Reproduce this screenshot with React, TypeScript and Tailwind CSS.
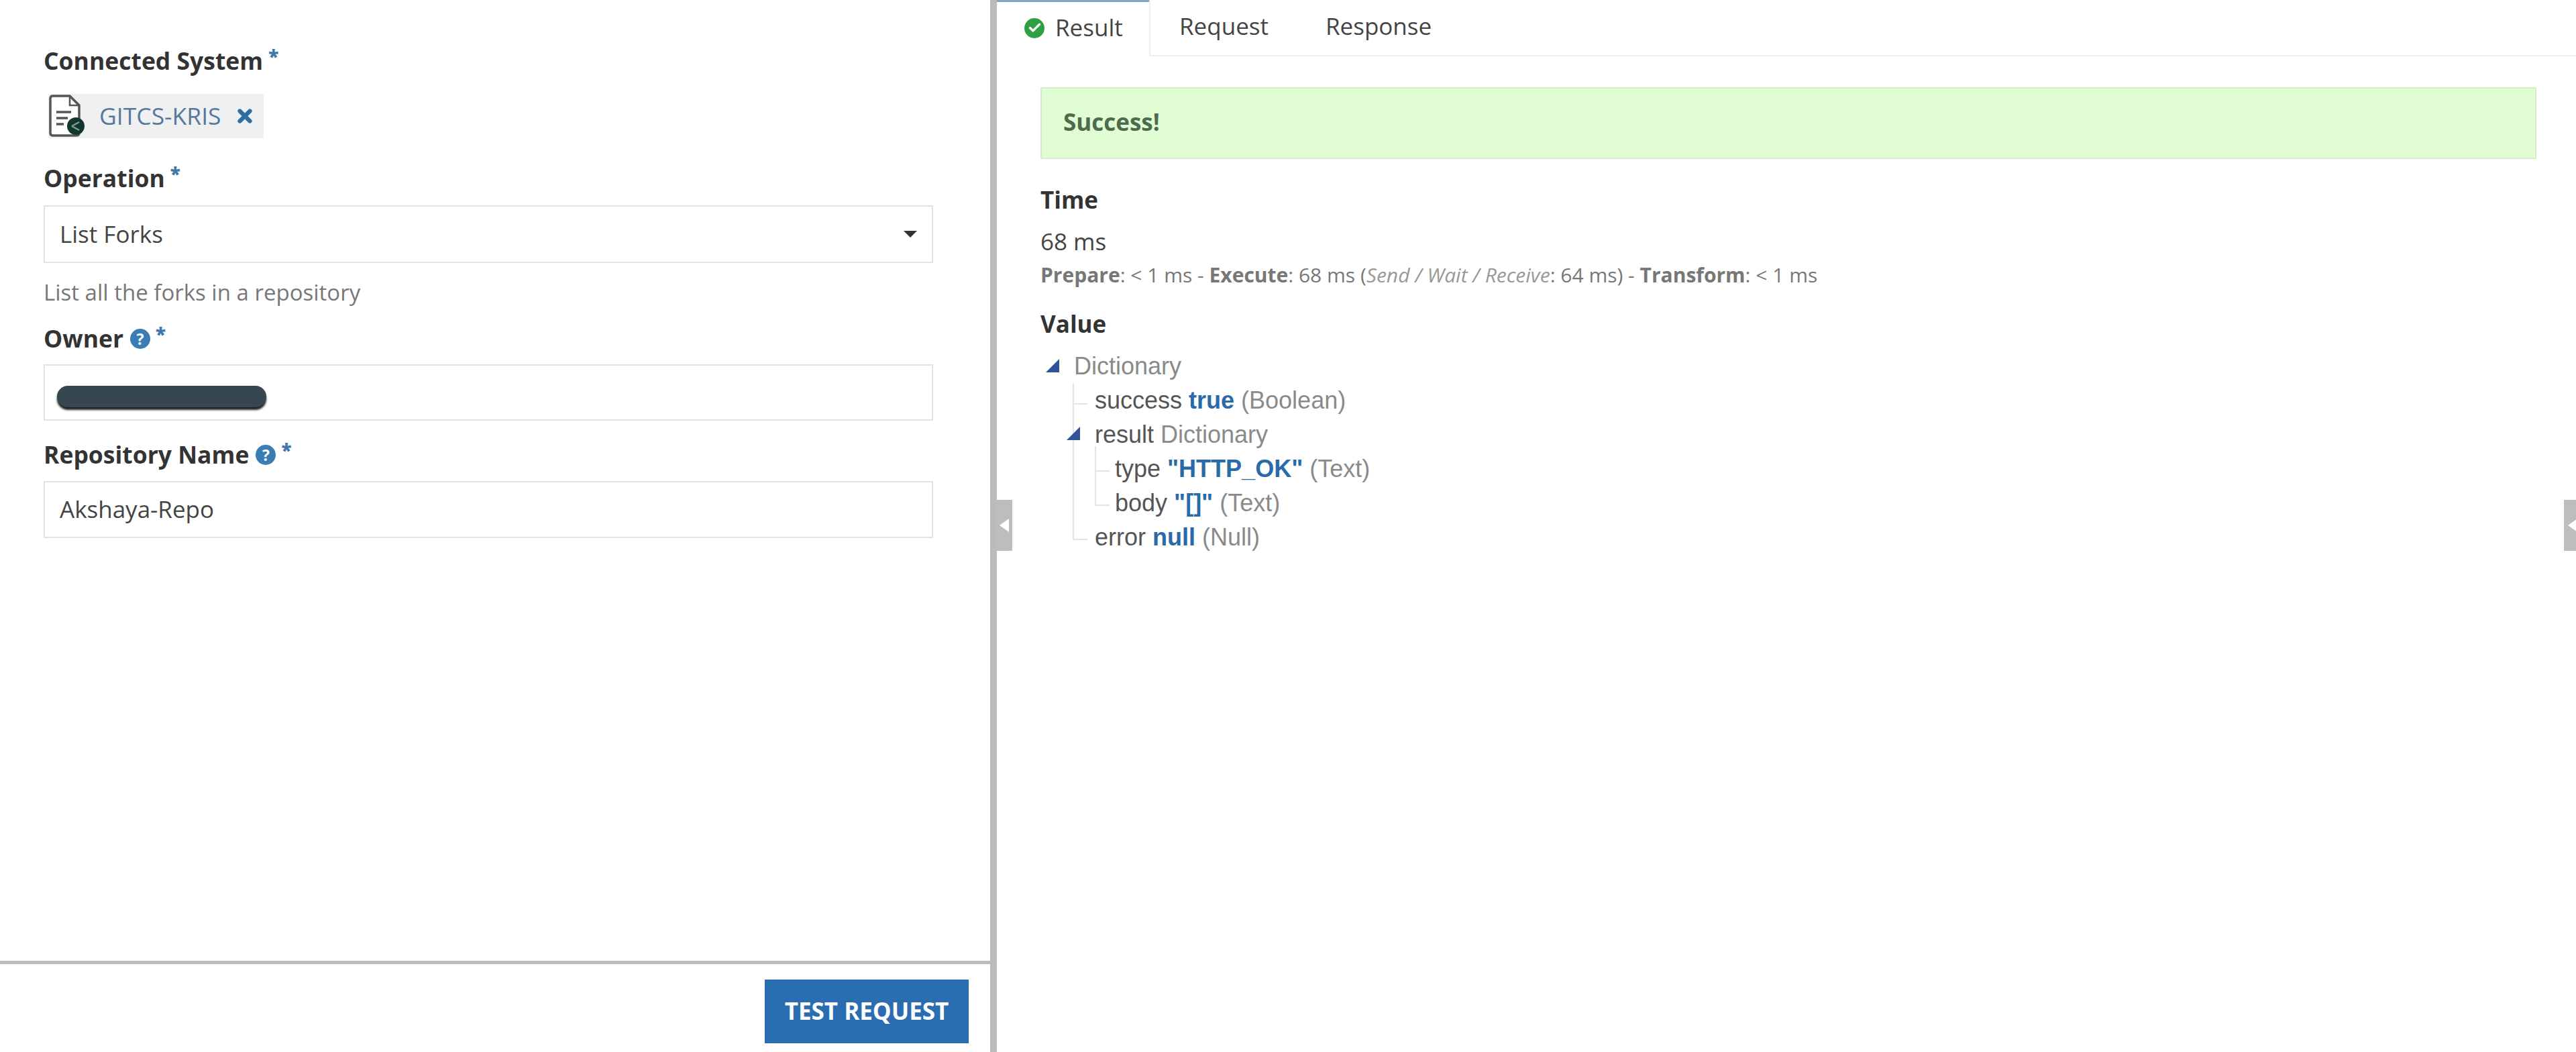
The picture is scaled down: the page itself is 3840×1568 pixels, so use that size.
import { Check, X } from "lucide-react";
import type { ReactNode } from "react";

const openSans = "font-['Open_Sans',sans-serif]";

function Required() {
  return <span className="ml-[8px] self-start text-[28px] leading-[36px] font-extrabold text-[#3f78a8]">*</span>;
}

function HelpIcon() {
  return (
    <span className="ml-[10px] flex size-[30px] items-center justify-center rounded-full bg-[#3a7db5] text-[23px] leading-none font-bold text-white">
      ?
    </span>
  );
}

function FieldLabel({ text, help, className }: { text: string; help?: boolean; className: string }) {
  return (
    <div className={`flex h-[50px] items-center text-[35.5px] font-bold text-[#333333] ${className}`}>
      {text}
      {help && <HelpIcon />}
      <Required />
    </div>
  );
}

function TextBox({ children, className }: { children: ReactNode; className: string }) {
  return (
    <div className={`flex items-center border-2 border-[#e2e2e2] bg-white pl-[22px] text-[35px] text-[#444444] ${className}`}>
      {children}
    </div>
  );
}

function SystemIcon() {
  return (
    <svg viewBox="0 0 56 66" className="h-[66px] w-[56px] shrink-0">
      <path d="M3 7 Q3 3 7 3 H32 L46 17 V58 Q46 62 42 62 H7 Q3 62 3 58 Z" fill="#fff" stroke="#555" strokeWidth="3.5" />
      <path d="M32 3 V17 H46" fill="none" stroke="#555" strokeWidth="2.5" />
      <path d="M12 27 H34 M12 36 H29 M12 45 H23" stroke="#555" strokeWidth="3.5" />
      <circle cx="41" cy="48" r="13" fill="#12372f" />
      <path d="M35 48 L46 42 M35 48 L46 54" stroke="#7f9c92" strokeWidth="2.5" />
    </svg>
  );
}

function TreeRow({ children, className, arrow }: { children: ReactNode; className: string; arrow?: string }) {
  return (
    <div className={`relative h-[51px] leading-[51px] whitespace-pre ${className}`}>
      {arrow && (
        <svg viewBox="0 0 20 20" className={`absolute size-[20px] ${arrow}`}>
          <path d="M0 20 L20 0 V20 Z" fill="#2f5597" />
        </svg>
      )}
      {children}
    </div>
  );
}

const tint = "text-[#8a8a8a]";
const val = "font-bold text-[#2a6aa8]";

function ResultTree() {
  return (
    <div className="relative mt-[12px] font-['Liberation_Sans',sans-serif] text-[36px] text-[#555555]">
      <div className="absolute top-[51px] left-[48px] h-[233px] w-[2px] bg-[#e4e4e4]" />
      <div className="absolute top-[81px] left-[48px] h-[2px] w-[22px] bg-[#e4e4e4]" />
      <div className="absolute top-[283px] left-[48px] h-[2px] w-[22px] bg-[#e4e4e4]" />
      <div className="absolute top-[145px] left-[81px] h-[87px] w-[2px] bg-[#e4e4e4]" />
      <div className="absolute top-[181px] left-[81px] h-[2px] w-[22px] bg-[#e4e4e4]" />
      <div className="absolute top-[232px] left-[81px] h-[2px] w-[22px] bg-[#e4e4e4]" />
      <TreeRow className="pl-[50px]" arrow="left-[8px] top-[15px]">
        <span className={tint}>Dictionary</span>
      </TreeRow>
      <TreeRow className="pl-[81px]">
        success <span className={val}>true</span> <span className={tint}>(Boolean)</span>
      </TreeRow>
      <TreeRow className="pl-[81px]" arrow="left-[39px] top-[14px]">
        result <span className={tint}>Dictionary</span>
      </TreeRow>
      <TreeRow className="pl-[111px]">
        type <span className={val}>"HTTP_OK"</span> <span className={tint}>(Text)</span>
      </TreeRow>
      <TreeRow className="pl-[111px]">
        body <span className={val}>"[]"</span> <span className={tint}>(Text)</span>
      </TreeRow>
      <TreeRow className="pl-[81px]">
        error <span className={val}>null</span> <span className={tint}>(Null)</span>
      </TreeRow>
    </div>
  );
}

function CollapseHandle({ className }: { className: string }) {
  return (
    <div className={`absolute top-[745px] flex h-[76px] items-center bg-[#bdbdbd] ${className}`}>
      <svg viewBox="0 0 14 20" className="h-[20px] w-[14px]">
        <path d="M0 10 L14 0 V20 Z" fill="#fff" />
      </svg>
    </div>
  );
}

export default function App() {
  return (
    <div className={`relative flex h-[1568px] w-[3840px] overflow-hidden bg-white ${openSans}`}>
      <section className="flex w-[1476px] shrink-0 flex-col">
        <div className="flex-1 pt-[66px] pr-[85px] pl-[65px]">
          <FieldLabel text="Connected System" className="" />
          <div className="mt-[24px] ml-[7px] flex h-[66px] w-[321px] items-center bg-[#eef0f2]">
            <SystemIcon />
            <span className="ml-[20px] text-[35.5px] text-[#56789a]">GITCS-KRIS</span>
            <X className="ml-[20px] size-[30px] text-[#2f6ea5]" strokeWidth={5} />
          </div>
          <FieldLabel text="Operation" className="mt-[35px]" />
          <TextBox className="mt-[15px] h-[86px] justify-between pr-[22px]">
            List Forks
            <span className="size-0 border-x-[10px] border-t-[10px] border-x-transparent border-t-[#333333]" />
          </TextBox>
          <p className="mt-[25px] text-[33px] leading-[38px] text-[#777777]">List all the forks in a repository</p>
          <FieldLabel text="Owner" help className="mt-[25px]" />
          <TextBox className="mt-[13px] h-[84px]">
            <span className="mt-[11px] -ml-[4px] h-[32px] w-[312px] rounded-full bg-[#37474f] shadow-[0_4px_3px_#222]" />
          </TextBox>
          <FieldLabel text="Repository Name" help className="mt-[26px]" />
          <TextBox className="mt-[14px] h-[85px] text-[35.5px]">Akshaya-Repo</TextBox>
        </div>
        <footer className="flex h-[136px] justify-end border-t-[5px] border-[#bbbbbb] pt-[23px] pr-[32px]">
          <button className="flex h-[95px] w-[304px] items-center justify-center bg-[#2a6db0] text-[35px] font-bold text-white">
            TEST REQUEST
          </button>
        </footer>
      </section>
      <div className="w-[10px] shrink-0 bg-[#bbbbbb]" />
      <section className="min-w-0 flex-1">
        <nav className="flex h-[84px] items-stretch text-[35px] text-[#444444]">
          <div className="flex w-[227px] items-center border-t-[3px] border-[#7fa8c8] pb-[4px] pl-[41px]">
            <span className="flex size-[30px] items-center justify-center rounded-full bg-[#2ea043]">
              <Check className="size-[21px] text-white" strokeWidth={4} />
            </span>
            <span className="ml-[16px]">Result</span>
          </div>
          <div className="flex flex-1 items-center border-b-2 border-l-2 border-[#eeeeee] pb-[4px] pl-[43px]">
            Request
            <span className="ml-[85px]">Response</span>
          </div>
        </nav>
        <div className="pt-[46px] pr-[59px] pl-[65px]">
          <div className="flex h-[107px] items-center border-2 border-[#d5ecc8] bg-[#e0fdd4] pb-[2px] pl-[32px] text-[35px] font-bold text-[#4f6b4f]">
            Success!
          </div>
          <h2 className="mt-[36px] text-[35px] leading-[50px] font-bold text-[#333333]">Time</h2>
          <p className="mt-[12px] text-[35px] leading-[50px] text-[#444444]">68 ms</p>
          <p className="mt-[2px] text-[30px] leading-[46px] whitespace-pre text-[#777777]">
            <b>Prepare</b>: &lt; 1 ms - <b>Execute</b>: 68 ms (<i className="text-[#999999]">Send / Wait / Receive</i>: 64 ms) - <b>Transform</b>: &lt; 1 ms
          </p>
          <h2 className="mt-[25px] text-[35px] leading-[50px] font-bold text-[#333333]">Value</h2>
          <ResultTree />
        </div>
      </section>
      <CollapseHandle className="left-[1484px] w-[25px] justify-center" />
      <CollapseHandle className="right-0 w-[18px] pl-[6px]" />
    </div>
  );
}
